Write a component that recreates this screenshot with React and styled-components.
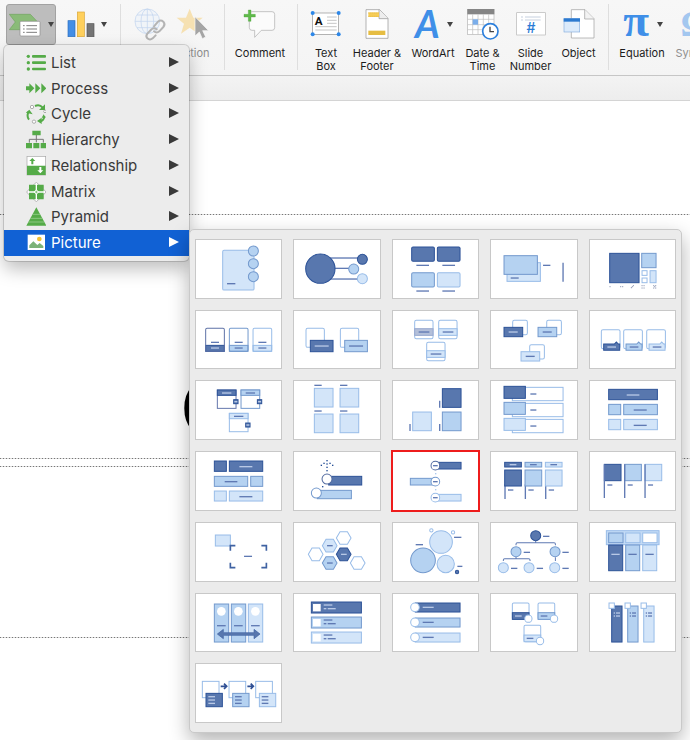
import styled, { createGlobalStyle, css } from "styled-components";

const GlobalStyle = createGlobalStyle`
  * {
    box-sizing: border-box;
  }

  body {
    margin: 0;
    background: #fff;
    font-family: Inter, "Liberation Sans", sans-serif;
    overflow: hidden;
  }

  button {
    border: 0;
    padding: 0;
    background: none;
    font: inherit;
    color: inherit;
  }
`;

const Page = styled.div`
  position: relative;
  min-height: 100vh;
  overflow: hidden;
`;

/* ---------- ribbon ---------- */

const Ribbon = styled.header`
  display: flex;
  height: 75px;
  overflow: hidden;
  background: linear-gradient(#f7f7f7, #f4f4f4);
`;

const Group = styled.div`
  display: flex;
  flex: none;
  padding: 0 ${(p) => p.$right || 0}px 0 ${(p) => p.$left || 0}px;
`;

const Separator = styled.div`
  flex: none;
  width: 1px;
  height: 66px;
  margin-top: 4px;
  background: #dedede;
`;

const Tool = styled.button`
  display: flex;
  flex: none;
  flex-direction: column;
  align-items: center;
  width: ${(p) => p.$width}px;
  font-size: 11px;
  line-height: 13px;
  color: ${(p) => (p.$muted ? "#8e8e8e" : "#1c1c1c")};
`;

const ToolIcon = styled.span`
  display: flex;
  align-items: center;
  justify-content: center;
  gap: 6px;
  height: 48px;
  margin-bottom: -1px;
  opacity: ${(p) => (p.$faded ? 0.45 : 1)};

  svg {
    overflow: visible;
  }
`;

const ToolLabel = styled.span`
  white-space: nowrap;
`;

const PressedTool = styled.button`
  display: flex;
  flex: none;
  align-items: center;
  justify-content: center;
  gap: 7px;
  width: 50px;
  height: 41px;
  margin-top: 4px;
  border: 1px solid #a2a2a2;
  border-radius: 3px;
  background: #bdbdbd;
`;

const SubBar = styled.div`
  height: 26px;
  border-top: 1px solid #c6c6c6;
  border-bottom: 1px solid #d4d4d4;
  background: linear-gradient(#f3f3f3, #ededed);
`;

/* ---------- slide ---------- */

const Slide = styled.main`
  display: flex;
  flex-direction: column;
  gap: 7px;
  padding-top: 113px;
`;

const dots = "repeating-linear-gradient(90deg, #777 0 1px, #dcdcdc 1px 3px)";

const Placeholder = styled.section`
  display: flex;
  align-items: flex-end;
  min-height: ${(p) => p.$height}px;
  padding: 0 0 8px 181px;
  background: ${dots} top / 100% 1px no-repeat, ${dots} bottom / 100% 1px no-repeat;
`;

const SlideTitle = styled.h1`
  margin: 0;
  font: bold 80px/84px "Liberation Sans", sans-serif;
  color: #000;
`;

/* ---------- menu ---------- */

const Menu = styled.nav`
  position: absolute;
  top: 45px;
  left: 4px;
  width: 185px;
  padding: 5px 0;
  border-radius: 5px;
  background: #ececec;
  box-shadow: 0 0 0 1px rgba(0, 0, 0, 0.14), 0 8px 18px rgba(0, 0, 0, 0.26);
`;

const MenuList = styled.ul`
  display: grid;
  grid-template-rows: repeat(8, 1fr);
  height: 206px;
  margin: 0;
  padding: 0;
  list-style: none;
`;

const MenuItem = styled.button`
  display: flex;
  align-items: center;
  gap: 5px;
  width: 100%;
  height: 100%;
  padding: 0 10px 0 22px;
  font-size: 15px;
  line-height: 20px;
  text-align: left;
  color: #3a3a3a;

  ${(p) =>
    p.$active &&
    css`
      background: #1161d4;
      color: #fff;
    `}
`;

const MenuLabel = styled.span`
  flex: 1;
`;

/* ---------- gallery ---------- */

const Gallery = styled.section`
  position: absolute;
  top: 184px;
  left: 100%;
  width: 493px;
  padding: 9px 5px;
  border: 1px solid #c9c9c9;
  border-radius: 5px;
  background: #ebebeb;
  box-shadow: 0 8px 20px rgba(0, 0, 0, 0.3);
`;

const GalleryGrid = styled.div`
  display: grid;
  grid-template-columns: repeat(5, 1fr);
  grid-template-rows: repeat(7, 1fr);
  gap: 11px;
  height: 484px;
`;

const Card = styled.button`
  display: flex;
  min-width: 0;
  min-height: 0;
  border: 1px solid #c8c8c8;
  background: #fff;

  ${(p) =>
    p.$picked &&
    css`
      border-color: #ee1c1c;
      outline: 1px solid #ee1c1c;
    `}

  svg {
    width: 100%;
    height: 100%;
  }
`;

/* ---------- thumbnail shapes ---------- */

const TONES = {
  dark: { fill: "#5877ae", stroke: "#2c5297" },
  mid: { fill: "#b5d2f1", stroke: "#7399cd" },
  light: { fill: "#d3e5f9", stroke: "#98bce8" },
  white: { fill: "#fff", stroke: "#98bce8" },
  whiteMid: { fill: "#fff", stroke: "#7399cd" },
  whiteDark: { fill: "#fff", stroke: "#50699f" },
  grey: { fill: "#b3bfd9", stroke: "#98a9d0" },
};

const THREE = ["dark", "mid", "light"];

const R = ({ x, y, w, h, t = "light", r = 0 }) => (
  <rect x={x} y={y} width={w} height={h} rx={r} strokeWidth="3" {...TONES[t]} />
);

const C = ({ x, y, r, t = "light" }) => (
  <circle cx={x} cy={y} r={r} strokeWidth="3" {...TONES[t]} />
);

const L = ({ x, y, w = 24, on }) => (
  <path d={`M${x} ${y}h${w}`} stroke={on === "dark" ? "#b9c9e6" : "#5f79b3"} strokeWidth="4" />
);

const V = ({ x, y, h }) => <path d={`M${x} ${y}v${h}`} stroke="#5f79b3" strokeWidth="4" />;

const Hex = ({ x, y, t, line }) => (
  <>
    <path
      d={`M${x - 22} ${y}l11 -19h22l11 19l-11 19h-22z`}
      strokeWidth="3"
      {...TONES[t]}
    />
    {line && <L x={x - 8} y={y} w={17} on={t} />}
  </>
);

const Dots = ({ points, size = 4, color = "#1f4a94" }) =>
  points.map(([x, y]) => (
    <rect key={`${x}-${y}`} x={x - size / 2} y={y - size / 2} width={size} height={size} fill={color} />
  ));

const thumbs = [
  {
    name: "Accented Picture",
    art: (
      <>
        <R x={83} y={34} w={94} h={119} r={4} />
        {[36, 74, 113].map((y) => (
          <C key={y} x={175} y={y} r={15} t="mid" />
        ))}
        <L x={96} y={134} w={25} />
      </>
    ),
  },
  {
    name: "Circular Picture Callout",
    art: (
      <>
        <L x={110} y={57} w={90} />
        <L x={120} y={88} w={50} />
        <L x={110} y={120} w={90} />
        <C x={82} y={89} r={44} t="dark" />
        <C x={208} y={61} r={15} t="dark" />
        <C x={182} y={90} r={15} t="mid" />
        <C x={208} y={119} r={15} />
      </>
    ),
  },
  {
    name: "Picture Caption List",
    art: (
      <>
        <R x={59} y={24} w={68} h={43} r={4} t="dark" />
        <R x={136} y={24} w={68} h={43} r={4} t="dark" />
        <R x={59} y={101} w={68} h={43} r={4} t="mid" />
        <R x={136} y={101} w={68} h={43} r={4} />
        <L x={73} y={79} w={38} />
        <L x={151} y={79} w={38} />
        <L x={73} y={156} w={38} />
        <L x={151} y={156} w={38} />
      </>
    ),
  },
  {
    name: "Captioned Pictures",
    art: (
      <>
        <R x={51} y={71} w={100} h={56} />
        <R x={42} y={50} w={100} h={56} t="mid" />
        <L x={62} y={117} />
        <L x={159} y={79} w={22} />
        <V x={219} y={71} h={57} />
      </>
    ),
  },
  {
    name: "Snapshot Picture List",
    art: (
      <>
        <R x={62} y={43} w={88} h={88} t="dark" />
        <R x={158} y={43} w={43} h={43} t="mid" />
        <R x={159} y={95} w={15} h={14} t="white" />
        <R x={159} y={117} w={15} h={14} t="white" />
        <R x={183} y={95} w={18} h={36} />
        <Dots
          size={3}
          color="#7c88a8"
          points={[
            [63, 143], [95, 143], [101, 143], [127, 146], [130, 143], [133, 140],
            [159, 140], [165, 140], [159, 147], [165, 147],
            [194, 140], [200, 140], [197, 143], [194, 147], [200, 147],
          ]}
        />
      </>
    ),
  },
  {
    name: "Picture Strips",
    art: [32, 103, 174].map((x, i) => (
      <g key={x}>
        <rect x={x} y="55" width="56" height="69" rx="4" fill="#fff" />
        <R x={x} y={106} w={56} h={18} t={THREE[i]} />
        <rect x={x} y="55" width="56" height="69" rx="4" fill="none" stroke={i ? TONES[THREE[i]].stroke : "#5e72a6"} strokeWidth="3" />
        <L x={x + 16} y={97} />
        <L x={x + 16} y={114} on={THREE[i]} />
      </g>
    )),
  },
  {
    name: "Bending Picture Accent",
    art: (
      <>
        <R x={39} y={55} w={55} h={57} r={5} t="white" />
        <R x={52} y={91} w={68} h={34} t="dark" />
        <L x={65} y={108} w={42} on="dark" />
        <R x={142} y={55} w={55} h={57} r={5} t="white" />
        <R x={155} y={91} w={68} h={34} t="mid" />
        <L x={168} y={108} w={42} />
      </>
    ),
  },
  {
    name: "Bending Picture Caption",
    art: [[68, 31, "grey"], [140, 31, "light"], [104, 97, "light"]].map(([x, y, t]) => (
      <g key={x}>
        <R x={x} y={y} w={55} h={55} r={5} t="white" />
        <R x={x} y={y + 25} w={55} h={20} t={t} />
        <L x={x + 12} y={y + 35} w={32} />
      </g>
    )),
  },
  {
    name: "Bending Picture Blocks",
    art: [[42, 31, "dark"], [144, 31, "mid"], [93, 104, "light"]].map(([x, y, t]) => (
      <g key={x}>
        <R x={x + 26} y={y} w={44} h={43} r={5} t="white" />
        <R x={x} y={y + 21} w={56} h={28} t={t} />
        <L x={x + 14} y={y + 35} w={27} on={t} />
      </g>
    )),
  },
  {
    name: "Picture Caption Callout",
    art: [37, 104, 173].map((x, i) => (
      <g key={x}>
        <R x={x} y={59} w={56} h={57} r={5} t="white" />
        <path
          d={`M${x + 7} 102h32l6 -6l6 6h4v19h-48z`}
          strokeWidth="3"
          {...TONES[THREE[i]]}
        />
        <L x={x + 18} y={111} w={26} on={THREE[i]} />
      </g>
    )),
  },
  {
    name: "Picture Frames",
    art: [[67, 30, "dark"], [138, 30, "mid"], [103, 100, "light"]].map(([x, y, t]) => (
      <g key={x}>
        <rect x={x} y={y} width="56" height="55" fill="#fff" stroke={t === "dark" ? "#6577ad" : TONES[t].stroke} strokeWidth="3" />
        <R x={x} y={y} w={56} h={16} t={t} />
        <L x={x + 14} y={y + 9} w={28} on={t} />
        <R x={x + 49} y={y + 29} w={13} h={12} t="dark" />
        <L x={x + 51} y={y + 35} w={9} on="dark" />
      </g>
    )),
  },
  {
    name: "Titled Picture Grid",
    art: [[64, 25], [141, 25], [64, 102], [141, 102]].map(([x, y]) => (
      <g key={`${x}-${y}`}>
        <R x={x} y={y} w={56} h={56} />
        <L x={x} y={y - 9} w={22} />
      </g>
    )),
  },
  {
    name: "Picture Grid",
    art: [[151, 26, "dark"], [151, 96, "mid"], [62, 96, "light"]].map(([x, y, t]) => (
      <g key={t}>
        <R x={x} y={y} w={56} h={56} t={t} />
        <V x={x - 8} y={y + 36} h={21} />
      </g>
    )),
  },
  {
    name: "Picture Accent Blocks",
    art: THREE.map((t, i) => (
      <g key={t}>
        <R x={67} y={22 + i * 48} w={152} h={40} t="white" />
        <R x={42} y={19 + i * 48} w={64} h={36} t={t} />
        <L x={121} y={42 + i * 48} w={18} />
      </g>
    )),
  },
  {
    name: "Horizontal Picture List",
    art: (
      <>
        <R x={59} y={28} w={146} h={31} t="dark" />
        <L x={113} y={45} w={38} on="dark" />
        <R x={59} y={73} w={36} h={31} t="mid" />
        <R x={104} y={73} w={101} h={31} t="mid" />
        <L x={134} y={90} w={39} />
        <R x={59} y={118} w={36} h={31} />
        <R x={104} y={118} w={101} h={31} />
        <L x={134} y={136} w={39} />
      </>
    ),
  },
  {
    name: "Alternating Picture Blocks",
    art: (
      <>
        <R x={58} y={30} w={36} h={31} t="dark" />
        <R x={103} y={30} w={100} h={31} t="dark" />
        <L x={133} y={47} w={39} on="dark" />
        <R x={58} y={76} w={100} h={30} t="mid" />
        <R x={167} y={76} w={36} h={30} t="mid" />
        <L x={89} y={92} w={38} />
        <R x={58} y={120} w={36} h={30} />
        <R x={103} y={120} w={100} h={30} />
        <L x={133} y={137} w={39} />
      </>
    ),
  },
  {
    name: "Ascending Picture Accent",
    art: (
      <>
        <Dots
          points={[
            [102, 29], [102, 39], [102, 49], [102, 59], [93, 37], [85, 43], [111, 37], [119, 43], [89, 107],
          ]}
        />
        <R x={107} y={76} w={99} h={26} t="dark" />
        <C x={102} y={84} r={15} t="whiteDark" />
        <R x={73} y={118} w={102} h={25} t="mid" />
        <C x={70} y={126} r={15} t="whiteMid" />
      </>
    ),
  },
  {
    name: "Alternating Picture Circles",
    picked: true,
    art: (
      <>
        <R x={130} y={34} w={77} h={20} t="dark" />
        <R x={55} y={82} w={75} h={20} t="mid" />
        <R x={130} y={130} w={77} h={20} />
        <C x={130} y={44} r={13} t="whiteDark" />
        <C x={130} y={92} r={13} t="whiteMid" />
        <C x={130} y={140} r={13} t="white" />
        <L x={123} y={44} w={14} />
        <L x={123} y={92} w={14} />
        <L x={123} y={140} w={14} />
        <Dots points={[[131, 68], [131, 116]]} color="#a9c8ee" />
      </>
    ),
  },
  {
    name: "Title Picture Lineup",
    art: THREE.map((t, i) => (
      <g key={t}>
        <V x={45 + i * 61} y={100} h={44} />
        <R x={44 + i * 61} y={34} w={50} h={14} t={t} />
        <L x={59 + i * 61} y={41} w={20} on={t} />
        <R x={44 + i * 61} y={57} w={50} h={48} t={t} />
        <L x={54 + i * 61} y={117} w={16} />
      </g>
    )),
  },
  {
    name: "Picture Lineup",
    art: THREE.map((t, i) => (
      <g key={t}>
        <R x={46 + i * 61} y={40} w={50} h={49} t={t} />
        <V x={46 + i * 61} y={40} h={101} />
        <L x={55 + i * 61} y={102} w={15} />
      </g>
    )),
  },
  {
    name: "Framed Text Picture",
    art: (
      <>
        <R x={61} y={39} w={45} h={33} />
        <path
          d="M106 86v-15h15M199 71h15v15M214 122v15h-15M121 137h-15v-15"
          fill="none"
          stroke="#3f62a2"
          strokeWidth="5"
        />
        <L x={147} y={103} />
      </>
    ),
  },
  {
    name: "Hexagon Cluster",
    art: (
      <>
        <Hex x={152} y={48} t="white" />
        <Hex x={110} y={71} t="light" line />
        <Hex x={68} y={97} t="white" />
        <Hex x={152} y={97} t="dark" line />
        <Hex x={110} y={123} t="mid" line />
        <Hex x={194} y={123} t="white" />
      </>
    ),
  },
  {
    name: "Bubble Picture List",
    art: (
      <>
        <C x={93} y={115} r={37} t="mid" />
        <C x={147} y={60} r={34} />
        <C x={161} y={126} r={26} />
        <C x={118} y={25} r={5} t="white" />
        <C x={183} y={31} r={5} t="white" />
        <C x={195} y={150} r={5} t="dark" />
        <L x={71} y={68} w={22} />
        <L x={186} y={46} w={22} />
        <L x={196} y={133} w={15} />
      </>
    ),
  },
  {
    name: "Circle Picture Hierarchy",
    art: (
      <>
        <path
          d="M78 70v-4q0 -4 4 -4h110q4 0 4 4v4M40 117v-3q0 -4 4 -4h72q4 0 4 4v3M196 106v11M137 56v6M78 105v5"
          fill="none"
          stroke="#5f79b3"
          strokeWidth="3"
        />
        <C x={137} y={41} r={15} t="dark" />
        <C x={78} y={89} r={15} t="mid" />
        <C x={195} y={89} r={15} t="mid" />
        <C x={40} y={137} r={15} />
        <C x={117} y={137} r={15} />
        <C x={194} y={137} r={15} />
        {[[159, 43], [101, 91], [217, 91], [63, 139], [140, 139], [217, 139]].map(([x, y]) => (
          <L key={`${x}-${y}`} x={x} y={y} w={19} />
        ))}
      </>
    ),
  },
  {
    name: "Vertical Picture List",
    art: (
      <>
        <rect x="52" y="26" width="158" height="42" fill="#c4dbf6" stroke="#98bce8" strokeWidth="3" />
        {["mid", "light", "white"].map((t, i) => (
          <R key={t} x={59 + i * 51} y={33} w={43} h={29} t={t} />
        ))}
        {THREE.map((t, i) => (
          <g key={t}>
            <R x={59 + i * 51} y={69} w={42} h={77} t={t} />
            <L x={67 + i * 51} y={97} w={25} on={t} />
          </g>
        ))}
      </>
    ),
  },
  {
    name: "Continuous Picture List",
    art: (
      <>
        {["mid", "mid", "light"].map((t, i) => (
          <g key={i}>
            <R x={58 + i * 51} y={33} w={43} h={114} t={t} />
            <circle cx={79 + i * 51} cy="55" r="13" fill="#fff" />
            <L x={66 + i * 51} y={98} w={26} />
          </g>
        ))}
        <path
          d="M67 123l18 -14v10h92v-10l18 14l-18 14v-10h-92v10z"
          fill="#5877ae"
          stroke="#3f62a2"
          strokeWidth="2"
        />
      </>
    ),
  },
  {
    name: "Vertical Picture Blocks",
    art: THREE.map((t, i) => (
      <g key={t}>
        <R x={55} y={27 + i * 45} w={150} h={33} t={t} />
        <rect x="60" y={33 + i * 45} width="23" height="22" fill="#fff" />
        <L x={92} y={36 + i * 45} w={26} on={t} />
        <L x={92} y={47 + i * 45} w={8} on={t} />
        <L x={104} y={47 + i * 45} w={24} on={t} />
      </g>
    )),
  },
  {
    name: "Vertical Picture Accent List",
    art: THREE.map((t, i) => (
      <g key={t}>
        <R x={70} y={30 + i * 45} w={134} h={27} t={t} />
        <C x={69} y={43 + i * 45} r={13} t="white" />
        <L x={92} y={43 + i * 45} w={33} on={t} />
      </g>
    )),
  },
  {
    name: "Bending Picture Semi-Transparent Text",
    art: [[67, 30, "dark"], [144, 30, "mid"], [102, 97, "light"]].map(([x, y, t]) => (
      <g key={t}>
        <R x={x} y={y} w={50} h={49} r={4} t="white" />
        <R x={x} y={y + 29} w={50} h={20} t={t} />
        <L x={x + 8} y={y + 39} w={20} on={t} />
        <C x={x + 48} y={y + 47} r={11} t="white" />
      </g>
    )),
  },
  {
    name: "Picture Accent List",
    art: THREE.map((t, i) => (
      <g key={t}>
        <R x={68 + i * 48} y={39} w={31} h={108} t={t} />
        <R x={60 + i * 48} y={30} w={16} h={16} t="white" />
        {[60, 69].map((y) => (
          <g key={y}>
            <L x={74 + i * 48} y={y} w={4} on={t} />
            <L x={81 + i * 48} y={y} w={12} on={t} />
          </g>
        ))}
      </g>
    )),
  },
  {
    name: "Picture Accent Process",
    art: THREE.map((t, i) => (
      <g key={t}>
        <R x={22 + i * 80} y={55} w={50} h={49} t="white" />
        <R x={33 + i * 80} y={91} w={49} h={40} t={t} />
        {[101, 111, 121].map((y) => (
          <L key={y} x={40 + i * 80} y={y} w={20} on={t} />
        ))}
        {i < 2 && (
          <path
            d={`M${77 + i * 80} 70h18m-8 -8l8 8l-8 8`}
            fill="none"
            stroke="#2f4f94"
            strokeWidth="5"
          />
        )}
      </g>
    )),
  },
];

/* ---------- menu icons ---------- */

const GREEN = "#55ab48";

const MenuIcon = ({ children }) => (
  <svg width="20" height="20" viewBox="0 0 60 60" fill={GREEN}>
    {children}
  </svg>
);

const menuItems = [
  {
    label: "List",
    icon: [10, 29, 48].map((y) => (
      <g key={y}>
        <circle cx="7" cy={y} r="5" />
        <rect x="18" y={y - 4} width="42" height="8" rx="3" />
      </g>
    )),
  },
  {
    label: "Process",
    icon: <path d="M0 22h10v-9l15 15l-15 15v-9h-10zM28 13l15 15l-15 15zM46 13l15 15l-15 15z" />,
  },
  {
    label: "Cycle",
    icon: (
      <>
        <g fill="none" stroke={GREEN} strokeWidth="6">
          <path d="M27 6q14 -6 23 5M55 36q0 14 -14 16M9 47q-8 -10 -1 -24" />
        </g>
        <path d="M57 1v17h-18zM47 41v19l-14 -9zM-1 26l11 -9l10 14zM53 31l6 10h-12z" />
        <g fill="#fff" stroke="#8c8c8c" strokeWidth="2">
          <circle cx="18" cy="9" r="5" />
          <circle cx="57" cy="22" r="4" />
          <circle cx="24" cy="53" r="5" />
        </g>
      </>
    ),
  },
  {
    label: "Hierarchy",
    icon: (
      <>
        <path d="M31 15v22M10 38v-10h42v10" fill="none" stroke="#777" strokeWidth="3" />
        <path d="M19 2h25v14h-25zM0 39h18v16h-18zM22 39h18v16h-18zM44 39h18v16h-18z" />
      </>
    ),
  },
  {
    label: "Relationship",
    icon: (
      <>
        <rect x="3" y="1" width="56" height="56" fill="#fff" stroke="#a5a5a5" strokeWidth="2" />
        <path d="M3 29h56v28h-56zM19 6l9 9h-6v10h-6v-10h-6z" />
        <path d="M43 52l9 -9h-6v-10h-6v10h-6z" fill="#fff" />
      </>
    ),
  },
  {
    label: "Matrix",
    icon: (
      <>
        <path d="M31 1l12 11l8 -1v9l9 10l-9 10v9l-8 -1l-12 11l-12 -11l-8 1v-9l-9 -10l9 -10v-9l8 1z" fill="#fff" stroke="#999" strokeWidth="2" />
        <path d="M9 8h20v20h-20zM33 8h20v20h-20zM9 32h20v20h-20zM33 32h20v20h-20z" />
        <path d="M31 22l8 8l-8 8l-8 -8z" fill="#fff" />
        <path d="M31 26v8M27 30h8" fill="none" stroke={GREEN} strokeWidth="2" />
      </>
    ),
  },
  {
    label: "Pyramid",
    icon: (
      <>
        <path d="M31 1l30 55h-60z" />
        <path d="M20 22h22M13 34h36M7 45h48" stroke="#a6d79d" strokeWidth="2" />
      </>
    ),
  },
  {
    label: "Picture",
    icon: (
      <>
        <rect x="5" y="5" width="52" height="46" fill="#fff" />
        <path d="M10 45v-8l12 -12l12 11l7 -6l11 9v6z" fill="#7cb277" />
        <circle cx="40" cy="18" r="7" fill="#f2c136" />
      </>
    ),
  },
];

const Arrow = () => (
  <svg width="10" height="12" viewBox="0 0 10 12">
    <path d="M0 0l10 5l-10 5z" fill="currentColor" />
  </svg>
);

/* ---------- ribbon icons ---------- */

const Caret = () => (
  <svg width="6" height="5" viewBox="0 0 6 5">
    <path d="M0 0h6l-3 5z" fill="#444" />
  </svg>
);

const SmartArtIcon = () => (
  <svg width="32" height="24" viewBox="0 0 96 72">
    <path d="M1 4h63l22 23l-22 23h-63l18 -23z" fill="#8abb78" stroke="#6fa55d" strokeWidth="2" />
    <rect x="33" y="25" width="60" height="44" rx="3" fill="#fff" stroke="#8d8d8d" strokeWidth="2" />
    <path d="M42 38h5M42 48h5M42 58h5M52 38h32M52 48h32M52 58h32" stroke="#7d7d7d" strokeWidth="3" />
  </svg>
);

const ChartIcon = () => (
  <svg width="28" height="27" viewBox="0 0 84 81">
    <g strokeWidth="2">
      <rect x="3" y="29" width="21" height="48" fill="#438ee6" stroke="#2b6dbd" />
      <rect x="31" y="3" width="21" height="74" fill="#ffd05c" stroke="#d8a637" />
      <rect x="60" y="38" width="21" height="39" fill="#757575" stroke="#555" />
    </g>
  </svg>
);

const LinkIcon = () => (
  <svg width="32" height="33" viewBox="0 0 96 99" fill="none">
    <g stroke="#7ba7e4" strokeWidth="2">
      <circle cx="40" cy="40" r="37" fill="#eaf2fc" />
      <ellipse cx="40" cy="40" rx="19" ry="37" />
      <path d="M40 3v74M3 40h74M9 21h62M9 59h62" />
    </g>
    <g stroke="#666" strokeWidth="6" strokeLinecap="round">
      <path d="M60 55l12 -14q8 -7 16 0q7 8 0 16l-12 13q-8 7 -16 0" />
      <path d="M68 64q-9 -7 -16 0l-12 13q-6 8 0 14q8 7 16 0l9 -9" />
    </g>
  </svg>
);

const ActionIcon = () => (
  <svg width="32" height="32" viewBox="0 0 96 96">
    <path d="M38 2l11 27h28l-22 18l9 30l-26 -18l-26 18l9 -30l-22 -18h28z" fill="#f6c862" />
    <path d="M54 26v58l13 -12l9 20l10 -5l-9 -19h18z" fill="#444" stroke="#fff" strokeWidth="2" />
  </svg>
);

const CommentIcon = () => (
  <svg width="32" height="30" viewBox="0 0 96 90">
    <path d="M24 8h60q8 0 8 8v40q0 8 -8 8h-32l-20 21v-21h-8q-8 0 -8 -8v-40q0 -8 8 -8z" fill="#fbfbfb" stroke="#aaa" strokeWidth="2" />
    <path d="M13 3h8v13h13v8h-13v13h-8v-13h-13v-8h13z" fill="#5fba4a" stroke="#4a9f39" strokeWidth="1" />
  </svg>
);

const TextBoxIcon = () => (
  <svg width="32" height="28" viewBox="0 0 96 84">
    <rect x="8" y="9" width="78" height="64" fill="#fff" stroke="#8f8f8f" strokeWidth="2" />
    <path d="M51 21h29M51 31h29M51 40h29M16 50h64M16 60h64" stroke="#a9a9a9" strokeWidth="2" />
    <text x="14" y="44" fontFamily="Roboto, sans-serif" fontWeight="700" fontSize="35" fill="#111">A</text>
    <g fill="#2d87e8">
      <circle cx="8" cy="9" r="6" />
      <circle cx="86" cy="9" r="6" />
      <circle cx="8" cy="73" r="6" />
      <circle cx="86" cy="73" r="6" />
    </g>
  </svg>
);

const HeaderIcon = () => (
  <svg width="24" height="30" viewBox="0 0 72 90">
    <path d="M3 2h41l25 26v60h-66z" fill="#fff" stroke="#8f8f8f" strokeWidth="2" />
    <path d="M42 2v27h27" fill="#eee" stroke="#8f8f8f" strokeWidth="2" />
    <path d="M10 10h32v14h-32z" fill="#f6cd57" />
    <path d="M10 12h32M10 22h32" stroke="#dcae3c" strokeWidth="2" strokeDasharray="3 3" />
    <path d="M10 65h51v13h-51z" fill="#e6bd42" />
  </svg>
);

const WordArtIcon = () => (
  <svg width="28" height="32" viewBox="0 0 28 32">
    <text x="2" y="30" fontFamily="Lato, sans-serif" fontStyle="italic" fontWeight="700" fontSize="38" fill="#3f8fe8">A</text>
  </svg>
);

const DateIcon = () => (
  <svg width="32" height="32" viewBox="0 0 96 96">
    <rect x="2" y="4" width="79" height="76" fill="#fff" stroke="#b3b3b3" strokeWidth="2" />
    <path d="M1 3h81v16h-81z" fill="#858585" />
    <path d="M17 19v60M33 19v60M49 19v60M65 19v60M2 34h79M2 50h79M2 65h79" stroke="#bdbdbd" strokeWidth="2" />
    <path d="M17 34h16v16h-16z" fill="#7baeea" />
    <circle cx="70" cy="70" r="23" fill="#fff" stroke="#2c7fdc" strokeWidth="5" />
    <path d="M69 56v15h12" fill="none" stroke="#444" strokeWidth="4" />
  </svg>
);

const NumberIcon = () => (
  <svg width="30" height="24" viewBox="0 0 90 72">
    <rect x="2" y="2" width="86" height="67" fill="#fff" stroke="#b5b5b5" strokeWidth="2" />
    <path d="M15 15h6M27 15h47M15 24h6M27 24h47" stroke="#aab8cf" strokeWidth="2" />
    <text x="45" y="63" textAnchor="middle" fontFamily="Inter, sans-serif" fontSize="42" fontWeight="500" fill="#2b7cd6">#</text>
  </svg>
);

const ObjectIcon = () => (
  <svg width="32" height="30" viewBox="0 0 96 90">
    <path d="M25 2h41l27 27v58h-68z" fill="#fff" stroke="#9b9b9b" strokeWidth="2" />
    <path d="M65 2v28h28" fill="#f3f3f3" stroke="#9b9b9b" strokeWidth="2" />
    <rect x="3" y="29" width="47" height="40" fill="#dcebfb" stroke="#86aede" strokeWidth="2" />
    <path d="M2 28h49v10h-49z" fill="#2c7ad0" />
  </svg>
);

const EquationIcon = () => (
  <svg width="30" height="32" viewBox="0 0 30 32">
    <text x="15" y="28" textAnchor="middle" fontFamily="Liberation Serif, serif" fontWeight="700" fontSize="47" fill="#3f8fe8">π</text>
  </svg>
);

const SymbolIcon = () => (
  <svg width="28" height="32" viewBox="0 0 28 32">
    <text x="14" y="28" textAnchor="middle" fontFamily="Liberation Serif, serif" fontWeight="700" fontSize="36" fill="#3f8fe8">Ω</text>
  </svg>
);

const RibbonTool = ({ width, icon, lines, caret, muted }) => (
  <Tool $width={width} $muted={muted} type="button">
    <ToolIcon $faded={muted}>
      {icon}
      {caret && <Caret />}
    </ToolIcon>
    {lines.map((line) => (
      <ToolLabel key={line}>{line}</ToolLabel>
    ))}
  </Tool>
);

const App = () => {
  return (
    <Page>
      <GlobalStyle />
      <Ribbon>
        <Group $left={6}>
          <PressedTool type="button" aria-label="SmartArt">
            <SmartArtIcon />
            <Caret />
          </PressedTool>
          <RibbonTool width={62} icon={<ChartIcon />} lines={["Chart"]} caret />
        </Group>
        <Group $left={2}>
          <Separator />
        </Group>
        <Group $left={2} $right={15}>
          <RibbonTool width={54} icon={<LinkIcon />} lines={["Link"]} muted />
          <RibbonTool width={32} icon={<ActionIcon />} lines={["Action"]} muted />
        </Group>
        <Separator />
        <Group>
          <RibbonTool width={70} icon={<CommentIcon />} lines={["Comment"]} />
        </Group>
        <Group $left={2}>
          <Separator />
        </Group>
        <Group $left={3} $right={10}>
          <RibbonTool width={50} icon={<TextBoxIcon />} lines={["Text", "Box"]} />
          <RibbonTool width={52} icon={<HeaderIcon />} lines={["Header &", "Footer"]} />
          <RibbonTool width={60} icon={<WordArtIcon />} lines={["WordArt"]} caret />
          <RibbonTool width={39} icon={<DateIcon />} lines={["Date &", "Time"]} />
          <RibbonTool width={57} icon={<NumberIcon />} lines={["Slide", "Number"]} />
          <RibbonTool width={39} icon={<ObjectIcon />} lines={["Object"]} />
        </Group>
        <Separator />
        <Group>
          <RibbonTool width={66} icon={<EquationIcon />} lines={["Equation"]} caret />
          <RibbonTool width={40} icon={<SymbolIcon />} lines={["Symbol"]} muted />
        </Group>
      </Ribbon>
      <SubBar />
      <Slide>
        <Placeholder $height={245}>
          <SlideTitle>C</SlideTitle>
        </Placeholder>
        <Placeholder $height={172} />
      </Slide>

      <Menu>
        <MenuList>
          {menuItems.map((item) => (
            <li key={item.label}>
              <MenuItem type="button" $active={item.label === "Picture"}>
                <MenuIcon>{item.icon}</MenuIcon>
                <MenuLabel>{item.label}</MenuLabel>
                <Arrow />
              </MenuItem>
            </li>
          ))}
        </MenuList>
        <Gallery>
          <GalleryGrid>
            {thumbs.map((thumb) => (
              <Card key={thumb.name} type="button" aria-label={thumb.name} $picked={thumb.picked}>
                <svg viewBox="3 3 256 173" fill="none">
                  {thumb.art}
                </svg>
              </Card>
            ))}
          </GalleryGrid>
        </Gallery>
      </Menu>
    </Page>
  );
};

export default App;
